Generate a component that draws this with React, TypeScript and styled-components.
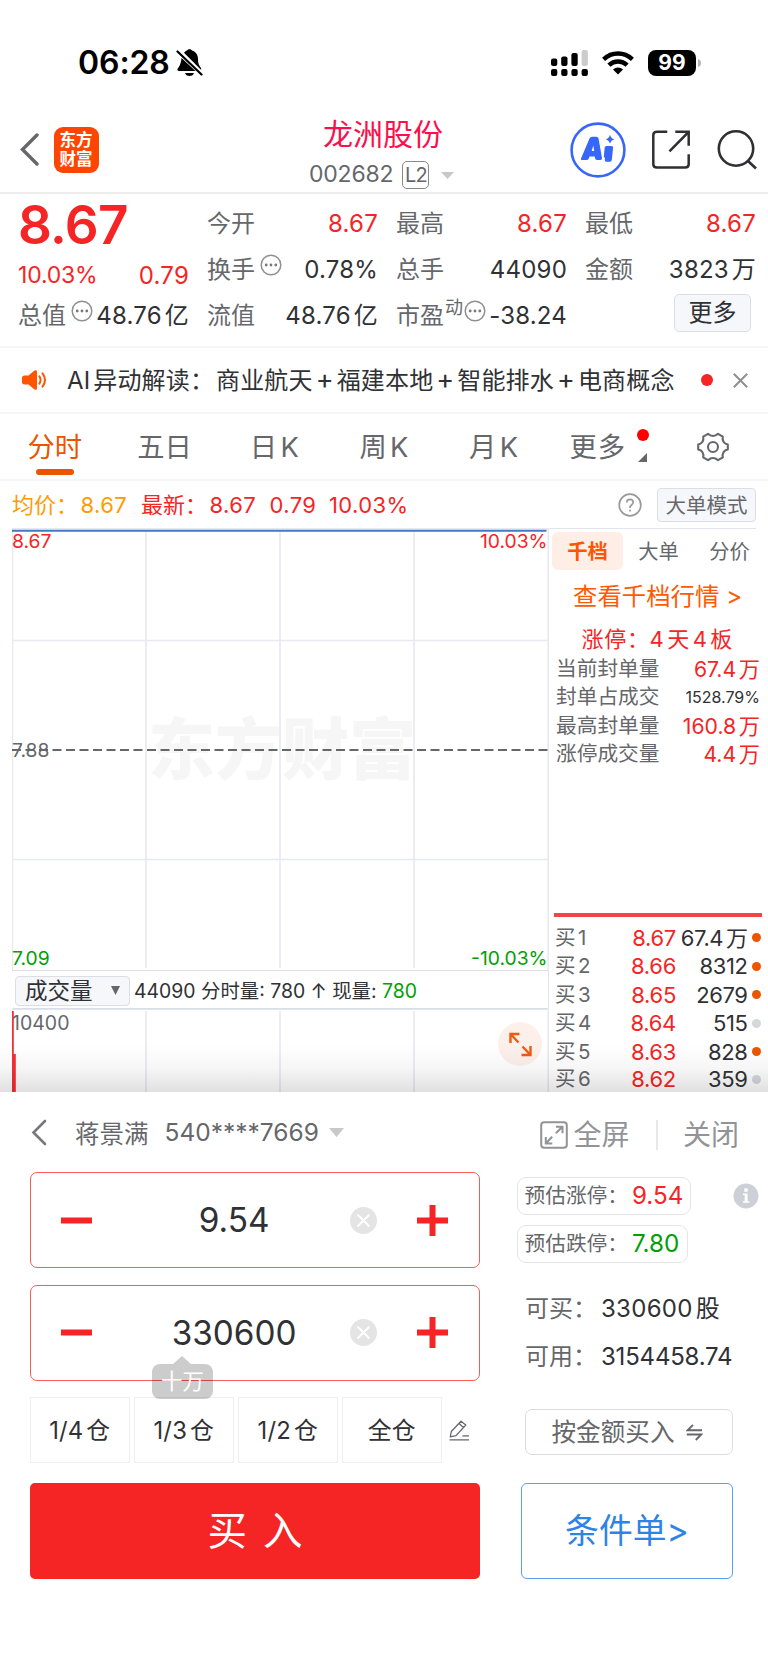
import React from 'react';
import styled, { createGlobalStyle } from 'styled-components';

const RED = '#f52525';
const GREEN = '#00a005';
const ORANGE = '#ff5500';
const DARK = '#303134';
const GRAY = '#66676b';
const FONT = 'Inter, "Noto Sans CJK SC", sans-serif';

const GlobalStyle = createGlobalStyle`
  * { box-sizing: border-box; }
  body { margin: 0; background: #fff; font-family: ${FONT}; color: ${DARK}; text-autospace: normal; }
  svg { display: block; flex: none; }
`;

const Page = styled.main`
  width: 768px;
  height: 1670px;
  display: flex;
  flex-direction: column;
  background: #fff;
  overflow: hidden;
  white-space: nowrap;
`;

const Text = styled.span<{ $size: number; $color?: string; $weight?: number; $ls?: number }>`
  font-size: ${(p) => p.$size}px;
  line-height: 1.2;
  color: ${(p) => p.$color ?? DARK};
  font-weight: ${(p) => p.$weight ?? 400};
  letter-spacing: ${(p) => p.$ls ?? 0}px;
`;

/* ---------- status bar ---------- */
const StatusBar = styled.div`
  height: 105px;
  padding: 21px 67px 0 78px;
  display: flex;
  align-items: center;
`;
const BellSlot = styled.span`
  margin-left: 6px;
`;
const StatusRight = styled.div`
  margin-left: auto;
  display: flex;
  align-items: center;
  gap: 14px;
`;
const Battery = styled.div`
  width: 48px;
  height: 26px;
  border-radius: 8px;
  background: #000;
  color: #fff;
  font-size: 21px;
  font-weight: 700;
  line-height: 26px;
  text-align: center;
`;
const BatteryGroup = styled.div`
  display: flex;
  align-items: center;
  gap: 2px;
`;

/* ---------- header ---------- */
const Header = styled.header`
  height: 89px;
  border-bottom: 2px solid #ededee;
  display: grid;
  grid-template-columns: 309px 1fr 198px;
`;
const HeaderLeft = styled.div`
  display: flex;
  align-items: center;
  padding: 0 0 0 20px;
  height: 89px;
  gap: 14.5px;
`;
const Logo = styled.div`
  width: 45px;
  height: 46px;
  border-radius: 9px;
  background: #ff4600;
  color: #fff;
  font-size: 16.5px;
  font-weight: 700;
  line-height: 19px;
  text-align: center;
  padding-top: 4px;
`;
const HeaderMid = styled.div`
  padding-top: 10.5px;
`;
const StockName = styled.h1`
  margin: 0 0 0 14px;
  font-size: 30px;
  line-height: 36px;
  font-weight: 400;
  color: #fb0f4d;
`;
const CodeRow = styled.div`
  display: flex;
  align-items: center;
  height: 30px;
  margin-top: 8.5px;
`;
const LevelBadge = styled.div`
  width: 27px;
  height: 28px;
  border: 1.5px solid #87888b;
  border-radius: 5px;
  margin: 0 12px 0 9px;
  color: ${GRAY};
  font-size: 20px;
  line-height: 26px;
  text-align: center;
  letter-spacing: -1px;
`;
const HeaderRight = styled.div`
  display: flex;
  align-items: center;
  height: 89px;
`;
const HeaderIcon = styled.span<{ $ml: number }>`
  margin-left: ${(p) => p.$ml}px;
`;

/* ---------- quote ---------- */
const Quote = styled.section`
  height: 154px;
  border-bottom: 2px solid #f6f6f7;
  padding: 6px 12px 0 18px;
  display: grid;
  grid-template-columns: repeat(4, 170px);
  column-gap: 19px;
`;
const QuoteCol = styled.div`
  display: flex;
  flex-direction: column;
`;
const QuoteRow = styled.div<{ $h?: number }>`
  height: ${(p) => p.$h ?? 46}px;
  display: flex;
  align-items: center;
  font-size: 24px;
  line-height: 29px;
`;
const Label = styled.span`
  color: ${GRAY};
`;
const Value = styled.span<{ $color?: string }>`
  margin: 0 -1px 0 auto;
  color: ${(p) => p.$color ?? DARK};
  letter-spacing: 0.2px;
`;
const RaisedIcon = styled.span`
  margin: 0 -8px 9px 5px;
`;
const Sup = styled.span`
  font-size: 18px;
  color: ${GRAY};
  margin: 0 -4px 16px 1px;
`;
const MoreButton = styled.button`
  width: 77px;
  height: 38px;
  margin: -4px 4px 0 auto;
  padding: 0;
  border: 1.5px solid #dcdee5;
  border-radius: 5px;
  background: #f6f7fb;
  font: 24px/36px ${FONT};
  color: ${DARK};
`;

/* ---------- news ---------- */
const News = styled.section`
  height: 66px;
  border-bottom: 2px solid #f6f6f7;
  padding: 0 20px 0 21px;
  display: flex;
  align-items: center;
`;
const NewsText = styled.span`
  margin-left: 20px;
  width: 634px;
  font-size: 24px;
  line-height: 29px;
  letter-spacing: 0.15px;
`;
const NewsLead = styled.span`
  margin-right: 2px;
`;
const PlusSign = styled.span`
  margin: 0 3px;
  font-size: 27px;
  line-height: 1;
`;
const Dot = styled.span<{ $d: number; $color: string }>`
  width: ${(p) => p.$d}px;
  height: ${(p) => p.$d}px;
  border-radius: 50%;
  flex: none;
  background: ${(p) => p.$color};
`;
const Push = styled.span`
  margin-left: auto;
`;

/* ---------- tabs ---------- */
const Tabs = styled.nav`
  height: 67px;
  border-bottom: 2px solid #f6f6f7;
  display: flex;
`;
const Tab = styled.div<{ $active?: boolean; $w?: number; $ls?: number }>`
  width: ${(p) => p.$w ?? 109.7}px;
  display: flex;
  flex-direction: column;
  align-items: center;
  padding-top: 17px;
  font-size: 27.3px;
  line-height: 34px;
  letter-spacing: ${(p) => p.$ls ?? 0}px;
  color: ${(p) => (p.$active ? '#ec5500' : GRAY)};
  &::after {
    content: '';
    width: 38px;
    height: 6px;
    margin-top: 4px;
    border-radius: 3px;
    background: ${(p) => (p.$active ? '#ec5500' : 'transparent')};
  }
`;
const TabFlag = styled.div`
  width: 20px;
  margin-left: -14px;
  padding-top: 15px;
  display: flex;
  flex-direction: column;
  align-items: center;
  gap: 12px;
`;
const TabGear = styled.div`
  margin-left: 44.5px;
  padding-top: 17.5px;
`;

/* ---------- info ---------- */
const Info = styled.section`
  height: 47px;
  padding: 1.5px 12px 0;
  display: flex;
  align-items: center;
  font-size: 22px;
  line-height: 27px;
  color: ${RED};
`;
const InfoItem = styled.span<{ $w: number; $color?: string }>`
  width: ${(p) => p.$w}px;
  letter-spacing: 0.4px;
  color: ${(p) => p.$color ?? RED};
`;
const InfoName = styled.span`
  letter-spacing: 0;
  margin-right: 2.5px;
`;
const ModeButton = styled.button`
  width: 99px;
  height: 34px;
  margin-left: 15px;
  padding: 0;
  border: 1.5px solid #dcdee5;
  border-radius: 4px;
  background: #f6f7fb;
  color: ${GRAY};
  font: 20.5px/31px ${FONT};
`;

/* ---------- market ---------- */
const Market = styled.section`
  height: 564px;
  margin: 0 0 0 12px;
  display: grid;
  grid-template-columns: 538px 218px;
  position: relative;
`;
const ChartCol = styled.div`
  display: flex;
  flex-direction: column;
`;
const VolumeBar = styled.div`
  height: 37px;
  display: flex;
  align-items: center;
  font-size: 19px;
  line-height: 24px;
  padding: 2px 0 0 3px;
  border-right: 1.5px solid #e1e4ec;
  width: 537px;
`;
const VolumeSelect = styled.div`
  width: 115px;
  height: 30px;
  border: 1.5px solid #dcdee5;
  border-radius: 4px;
  background: #f6f7fb;
  display: flex;
  align-items: center;
  justify-content: space-between;
  padding: 0 9px;
  font-size: 22.5px;
  margin-right: 4px;
`;
const VolumeText = styled.span<{ $color?: string }>`
  font-size: 19.4px;
  padding-top: 1px;
  color: ${(p) => p.$color ?? DARK};
`;
const Shade = styled.div`
  position: absolute;
  left: -12px;
  right: 0;
  bottom: 0;
  height: 48px;
  background: linear-gradient(to bottom, rgba(0, 0, 0, 0), rgba(0, 0, 0, 0.035) 50%, rgba(0, 0, 0, 0.12));
`;

const BookCol = styled.div`
  display: flex;
  flex-direction: column;
  border-top: 1.5px solid #e1e4ec;
  width: 206px;
`;
const BookTabs = styled.div`
  display: flex;
  padding: 3px 0 0 2px;
`;
const BookTab = styled.div<{ $active?: boolean }>`
  width: 71px;
  height: 38px;
  flex: none;
  border-radius: 6px;
  text-align: center;
  font-size: 20.3px;
  line-height: 40px;
  color: ${(p) => (p.$active ? ORANGE : GRAY)};
  font-weight: ${(p) => (p.$active ? 700 : 400)};
  background: ${(p) => (p.$active ? '#ffeee6' : 'transparent')};
`;
const BookLink = styled.div`
  margin: 9px 0 0 23px;
  font-size: 24.4px;
  line-height: 34px;
  color: #ff5a00;
`;
const LimitTitle = styled.div`
  margin: 10px 0 0 31.5px;
  font-size: 22px;
  line-height: 32px;
  letter-spacing: 0.7px;
  color: ${RED};
`;
const LimitRow = styled.div`
  display: flex;
  justify-content: space-between;
  align-items: center;
  height: 28.5px;
  width: 204px;
  margin-left: 6px;
`;
const Pressure = styled.div`
  width: 208px;
  height: 4px;
  background: #f24545;
  margin: 144px 0 6.5px 4px;
`;
const BidRow = styled.div`
  display: grid;
  grid-template-columns: 60px 61px 71.5px 9px;
  align-items: center;
  height: 28.5px;
  flex: none;
  margin-left: 5px;
  width: 207px;
  font-size: 22px;
  line-height: 22px;
  &:last-child {
    height: 26px;
    padding-bottom: 0;
    line-height: 20px;
  }
`;
const BidName = styled.span`
  font-size: 20.5px;
  color: ${GRAY};
`;
const BidPrice = styled.span`
  text-align: right;
  color: ${RED};
  letter-spacing: -0.3px;
`;
const BidQty = styled.span`
  justify-self: end;
  letter-spacing: -0.4px;
`;
const BidDot = styled(Dot)`
  margin-left: 4px;
`;

/* ---------- trade sheet ---------- */
const Sheet = styled.section`
  height: 578px;
  display: flex;
  flex-direction: column;
  background: #fff;
`;
const AccountBar = styled.div`
  height: 80px;
  padding: 1px 29px 0 31px;
  display: flex;
  align-items: center;
`;
const AccountName = styled.span`
  margin: 0 16px 0 28px;
  font-size: 24.5px;
  color: ${GRAY};
`;
const AccountCaret = styled.span`
  margin-left: 10px;
`;
const AccountActions = styled.div`
  margin: 5px 0 0 auto;
  display: flex;
  align-items: center;
  gap: 5px;
  font-size: 28px;
  line-height: 34px;
  color: #929397;
`;
const Separator = styled.span`
  width: 1.5px;
  height: 30px;
  background: #e8e8ea;
  margin: 0 20px 0 22px;
`;
const SheetBody = styled.div`
  display: grid;
  grid-template-columns: 450px 1fr;
  padding: 0 0 0 30px;
`;
const Left = styled.div`
  display: flex;
  flex-direction: column;
`;
const Stepper = styled.div`
  position: relative;
  height: 96px;
  margin-bottom: 16.5px;
  border: 1.5px solid #f95a5a;
  border-radius: 7px;
  display: grid;
  grid-template-columns: 90.6px 218px 47px 92px;
  align-items: center;
  justify-items: center;
`;
const StepValue = styled.span`
  font-size: 33.3px;
  line-height: 40px;
  padding-left: 7px;
`;
const UnitTip = styled.div`
  position: absolute;
  left: 121px;
  top: 78px;
  width: 61px;
  height: 35px;
  border-radius: 8px;
  background: rgba(0, 0, 0, 0.2);
  color: #fff;
  font-size: 21.5px;
  line-height: 34px;
  text-align: center;
  &::before {
    content: '';
    position: absolute;
    left: 21px;
    top: -8px;
    border: 9px solid transparent;
    border-top: 0;
    border-bottom: 8px solid rgba(0, 0, 0, 0.2);
  }
`;
const Shares = styled.div`
  display: flex;
  align-items: center;
  gap: 4.5px;
`;
const Share = styled.button`
  width: 99.5px;
  height: 66px;
  padding: 2px 0 0;
  background: #fff;
  border: 1.5px solid #efeff1;
  color: ${DARK};
  font: 23.8px/30px ${FONT};
  letter-spacing: 0.2px;
`;
const EditIcon = styled.span`
  margin-left: 3px;
`;
const BuyButton = styled.button`
  width: 450px;
  height: 96px;
  margin: 20px 0 0;
  padding: 0;
  border: 0;
  border-radius: 5px;
  background: ${RED};
  color: #fff;
  font: 39.5px/50px ${FONT};
  word-spacing: 5px;
`;
const Right = styled.div`
  display: flex;
  flex-direction: column;
  padding: 5px 0 0 37px;
`;
const PillRow = styled.div`
  display: flex;
  align-items: center;
  justify-content: space-between;
  padding-right: 9px;
  margin-bottom: 9.5px;
`;
const Pill = styled.div<{ $w: number }>`
  width: ${(p) => p.$w}px;
  height: 38px;
  border: 1.5px solid #e3e5ea;
  border-radius: 9px;
  display: flex;
  align-items: center;
  padding-left: 6.5px;
  font-size: 20.7px;
  line-height: 32px;
  color: ${GRAY};
`;
const PillValue = styled.span<{ $color: string }>`
  margin-left: 4px;
  font-size: 24.2px;
  color: ${(p) => p.$color};
`;
const Holdings = styled.div`
  margin-top: 13px;
`;
const Holding = styled.div`
  height: 48px;
  display: flex;
  align-items: center;
  padding-left: 8px;
  font-size: 24px;
  line-height: 30px;
`;
const HoldingLabel = styled.span`
  width: 76px;
  color: ${GRAY};
`;
const HoldingValue = styled.span<{ $ls: number }>`
  letter-spacing: ${(p) => p.$ls}px;
`;
const AmountButton = styled.button`
  width: 208px;
  height: 46px;
  margin: 28px 0 0 7.5px;
  padding: 0 2px 0 0;
  border: 1.5px solid #dcdde0;
  border-radius: 7px;
  background: #fff;
  color: ${GRAY};
  font: 24.6px/30px ${FONT};
  display: flex;
  align-items: center;
  justify-content: center;
  gap: 12px;
`;
const ConditionButton = styled.button`
  width: 212px;
  height: 96px;
  margin: 28px 0 0 4px;
  padding: 0;
  border: 1.5px solid #5b9df0;
  border-radius: 6px;
  background: #fff;
  color: #2d83e6;
  font: 33.8px/40px ${FONT};
`;

/* ---------- icons ---------- */
const Chevron = ({ w, h, sw, color }: { w: number; h: number; sw: number; color: string }) => (
  <svg width={w} height={h} viewBox={`0 0 ${w} ${h}`} fill="none" stroke={color} strokeWidth={sw} strokeLinecap="round">
    <path d={`M${w - 2} 2L2.5 ${h / 2}L${w - 2} ${h - 2}`} />
  </svg>
);
const Caret = ({ w, h, color }: { w: number; h: number; color: string }) => (
  <svg width={w} height={h} viewBox="0 0 10 10" preserveAspectRatio="none">
    <path d="M0 0H10L5 10Z" fill={color} />
  </svg>
);
const BellOff = () => (
  <svg width="27" height="28" viewBox="0 0 27 28">
    <path d="M8 3.8C9 2.4 10 1.8 11 1.4C12 -.2 15 -.2 16 1.4C20 2.5 22 6 22 10C22 15 23.5 17 25 19L25.2 21Z" fill="#000" />
    <path d="M5.5 9L19.5 22H3.2C1.5 22 .8 20.6 1.8 19.4C4.5 16.5 5 13 5.5 9Z" fill="#000" />
    <path d="M9 24H18C17 26.4 15.5 27 13.5 27S10 26.4 9 24Z" fill="#000" />
    <path d="M1.5 2.5L25.5 25.5" stroke="#000" strokeWidth="2.2" strokeLinecap="round" />
  </svg>
);
const Signal = () => (
  <svg width="37" height="26" viewBox="0 0 37 26">
    <rect x="0" y="8.5" width="6.3" height="7.5" rx="2" />
    <rect x="10.2" y="6.5" width="6.3" height="9.5" rx="2" />
    <rect x="20.4" y="3" width="6.3" height="13" rx="2" />
    <rect x="30.6" y="0" width="6.3" height="16" rx="2" fill="#ccc" />
    {[0, 10.2, 20.4, 30.6].map((x) => (
      <rect key={x} x={x} y="19" width="6.3" height="7" rx="2" />
    ))}
  </svg>
);
const Wifi = () => (
  <svg width="32" height="24" viewBox="0 0 32 24" fill="none" stroke="#000" strokeWidth="4.4">
    <path d="M1.6 8.4C9.8 .6 22.2 .6 30.4 8.4" />
    <path d="M6.9 14.2C12.1 9.2 19.9 9.2 25.1 14.2" />
    <path d="M11 18.6C13.8 15.9 18.2 15.9 21 18.6L16 23.6Z" fill="#000" stroke="none" />
  </svg>
);
const AiLogo = () => (
  <svg width="56" height="56" viewBox="0 0 56 56">
    <circle cx="28" cy="28" r="26.4" fill="none" stroke="#3766fb" strokeWidth="2.6" />
    <path
      fillRule="evenodd"
      d="M11 36.5L19.5 16.5Q20.3 14.8 22.2 14.8H26.2Q28.2 14.8 28.6 16.7L32 36Q32.3 38 30.3 38H27Q25.3 38 25 36.2L24.7 34.6H19.6L18.8 36.4Q18.1 38 16.3 38H12Q10.3 38 11 36.5ZM21.7 29H24.2L23.3 23.6Z"
      fill="#3766fb"
    />
    <path d="M36.5 24H41.5Q43.3 24 43.1 25.8L41.8 38Q41.6 39.7 39.8 39.7H36.4Q34.6 39.7 34.8 38L35 36L33.8 35L34.7 25.6Q34.9 24 36.5 24Z" fill="#3766fb" />
    <path d="M40 12.8Q41 16.4 44.2 17.3Q41 18.2 40 21.6Q39 18.2 35.8 17.3Q39 16.4 40 12.8Z" fill="#3766fb" />
  </svg>
);
const ShareOut = () => (
  <svg width="38" height="39" viewBox="0 0 38 39" fill="none" stroke="#303033" strokeWidth="2.5" strokeLinecap="square">
    <path d="M14 1.8H5Q1.3 1.8 1.3 5.2V34.2Q1.3 37.6 5 37.6H33Q36.7 37.6 36.7 34.2V25.5" />
    <path d="M24.5 1.8H36.7V14.5M36 2.5L18.3 20.5" />
  </svg>
);
const Search = () => (
  <svg width="40" height="40" viewBox="0 0 40 40" fill="none" stroke="#303033" strokeWidth="2.6">
    <circle cx="19" cy="18.5" r="17.2" />
    <path d="M31 31L39 38.5" />
  </svg>
);
const Dots = () => (
  <svg width="22" height="22" viewBox="0 0 22 22">
    <circle cx="11" cy="11" r="9.8" fill="none" stroke="#8f9093" strokeWidth="1.5" />
    {[6.2, 11, 15.8].map((x) => (
      <circle key={x} cx={x} cy="11" r="1.4" fill="#77787b" />
    ))}
  </svg>
);
const Speaker = () => (
  <svg width="26" height="22" viewBox="0 0 26 22">
    <path d="M3.5 6.5H7.5L13.5 1.6Q16 .2 16 3V19Q16 21.8 13.5 20.4L7.5 15.5H3.5Q1 15.5 1 13V9Q1 6.5 3.5 6.5Z" fill="#ff5500" />
    <path d="M18.5 7.4Q20.6 11 18.5 14.6M21.5 4.4Q26.5 11 21.5 17.6" fill="none" stroke="#ff5500" strokeWidth="2" strokeLinecap="round" />
  </svg>
);
const Cross = () => (
  <svg width="15" height="15" viewBox="0 0 15 15" stroke="#8e8f92" strokeWidth="2">
    <path d="M.8 .8L14.2 14.2M14.2 .8L.8 14.2" />
  </svg>
);
const Gear = () => (
  <svg width="32" height="30" viewBox="0 0 32 30" fill="none" stroke="#66676b" strokeWidth="2.1" strokeLinejoin="round">
    <path d="M11 1.8Q13.3 4 16 4T21 1.8L25.8 4.6Q25.2 7.6 26.5 9.8T30.8 12.6V17.4Q27.8 18 26.5 20.2T25.8 25.4L21 28.2Q18.7 26 16 26T11 28.2L6.2 25.4Q6.8 22.4 5.5 20.2T1.2 17.4V12.6Q4.2 12 5.5 9.8T6.2 4.6Z" />
    <circle cx="16" cy="15" r="5" />
  </svg>
);
const Help = () => (
  <svg width="24" height="24" viewBox="0 0 24 24" fill="none" stroke="#98999c" strokeWidth="1.7">
    <circle cx="12" cy="12" r="10.8" />
    <path d="M8.8 9.6Q8.8 6.3 12 6.3T15.2 9.3Q15.2 10.8 13.5 12T12 15M12 16.8V18.6" />
  </svg>
);
const Expand = () => (
  <svg width="28" height="28" viewBox="0 0 28 28" fill="none" stroke="#929397" strokeWidth="2">
    <rect x="1.2" y="1.2" width="25.6" height="25.6" rx="3" />
    <path d="M16 5.8H22.5V12.3M22.2 6L15.8 12.2M5.8 16V22.5H12.3M6 22.2L12.2 15.8" />
  </svg>
);
const Minus = () => (
  <svg width="31" height="31" viewBox="0 0 31 31">
    <path d="M0 12.5H31V18.5H0Z" fill={RED} />
  </svg>
);
const Plus = () => (
  <svg width="31" height="31" viewBox="0 0 31 31">
    <path d="M0 12.5H12.5V0H18.5V12.5H31V18.5H18.5V31H12.5V18.5H0Z" fill={RED} />
  </svg>
);
const Clear = () => (
  <svg width="27" height="27" viewBox="0 0 27 27">
    <circle cx="13.5" cy="13.5" r="13.5" fill="#e4e4e5" />
    <path d="M7.5 7.5L19.5 19.5M19.5 7.5L7.5 19.5" stroke="#fff" strokeWidth="2" />
  </svg>
);
const Pencil = () => (
  <svg width="21" height="21" viewBox="0 0 21 21" fill="none" stroke="#66676b" strokeWidth="1.3" strokeLinejoin="round">
    <path d="M1.3 16.8L2.3 11.5L12 1.3L16.8 5L7 15.6ZM10 3.4L14.5 7.4M.5 19.8H20M13.5 15.8H20" />
  </svg>
);
const Swap = () => (
  <svg width="17" height="17" viewBox="0 0 17 17" fill="none" stroke="#66676b" strokeWidth="1.9">
    <path d="M7 .8L1.6 6.3H16M.8 10.5H15.2L9.8 16" />
  </svg>
);
const InfoIcon = () => (
  <svg width="26" height="26" viewBox="0 0 26 26">
    <circle cx="13" cy="13" r="12.5" fill="#cdd1d7" />
    <circle cx="13" cy="7" r="2" fill="#fff" />
    <path d="M10 10.6H14.6V18.3H16.3V19.8H10V18.3H11.7V12.1H10Z" fill="#fff" />
  </svg>
);

const GRID = '#e6e9f0';

const PriceChart = () => (
  <svg width="538" height="443" viewBox="0 0 538 443" fontFamily={FONT} fontSize="19.3">
    <text x="136" y="246" fontSize="67" fontWeight="900" fill="#f6f6f7" textLength="268">东方财富</text>
    <g stroke={GRID} strokeWidth="1.6">
      <path d="M0 .8H538M.4 0V443M536.2 0V443M0 112.5H536M0 331.5H536M134 3V440M268 3V440M402 3V440" />
    </g>
    <path d="M0 443H536" stroke="#dcdfe6" strokeWidth="2" />
    <path d="M0 2.8H534.5" stroke="#4379bf" strokeWidth="2" />
    <path d="M0 222H536" stroke="#66676b" strokeWidth="1.8" strokeDasharray="9 4.5" />
    <g>
      <text x="0" y="19.5" fill={RED}>8.67</text>
      <text x="535.5" y="19.5" fill={RED} textAnchor="end">10.03%</text>
      <text x="0" y="229" fill={GRAY}>7.88</text>
      <text x="0" y="436.5" fill={GREEN}>7.09</text>
      <text x="535.5" y="436.5" fill={GREEN} textAnchor="end">-10.03%</text>
    </g>
  </svg>
);

const VolumeChart = () => (
  <svg width="538" height="84" viewBox="0 0 538 84" fontFamily={FONT} fontSize="19.5">
    <path d="M0 .9H536" stroke="#d8dde6" strokeWidth="1.8" />
    <path d="M.4 0V84M536.2 0V84M134 3V84M268 3V84M402 3V84" stroke={GRID} strokeWidth="1.6" />
    <path d="M0 3H1.8V46H3.8V84H0Z" fill="#f52f35" />
    <text x="0" y="22" fill={GRAY}>10400</text>
    <circle cx="508" cy="36" r="22" fill="#fdf0ea" />
    <path
      d="M498.5 35V26H507.5M499 26.5L506.5 34.5M518.5 38V47H509.5M518 46.5L510.5 38.5"
      fill="none"
      stroke="#f05a10"
      strokeWidth="2.4"
    />
  </svg>
);

const concepts = ['商业航天', '福建本地', '智能排水', '电商概念'];
const limits = [
  { name: '当前封单量', value: '67.4万', color: RED, size: 21.2 },
  { name: '封单占成交', value: '1528.79%', color: DARK, size: 16 },
  { name: '最高封单量', value: '160.8万', color: RED, size: 21.2 },
  { name: '涨停成交量', value: '4.4万', color: RED, size: 21.2 },
];
const bids = [
  { n: '买1', price: '8.67', qty: '67.4万', hot: true },
  { n: '买2', price: '8.66', qty: '8312', hot: true },
  { n: '买3', price: '8.65', qty: '2679', hot: true },
  { n: '买4', price: '8.64', qty: '515', hot: false },
  { n: '买5', price: '8.63', qty: '828', hot: true },
  { n: '买6', price: '8.62', qty: '359', hot: false },
];

export default function App() {
  return (
    <Page>
      <GlobalStyle />
      <StatusBar>
        <Text $size={32} $weight={600} $color="#000" $ls={-0.1}>06:28</Text>
        <BellSlot><BellOff /></BellSlot>
        <StatusRight>
          <Signal />
          <Wifi />
          <BatteryGroup>
            <Battery>99</Battery>
            <svg width="3" height="8" viewBox="0 0 3 8"><path d="M0 0Q3 1 3 4T0 8Z" fill="#b5b5b5" /></svg>
          </BatteryGroup>
        </StatusRight>
      </StatusBar>

      <Header>
        <HeaderLeft>
          <Chevron w={19} h={33} sw={3.4} color="#66676b" />
          <Logo>东方<br />财富</Logo>
        </HeaderLeft>
        <HeaderMid>
          <StockName>龙洲股份</StockName>
          <CodeRow>
            <Text $size={23} $color={GRAY} $ls={-0.2}>002682</Text>
            <LevelBadge>L2</LevelBadge>
            <Caret w={13} h={7} color="#c8c8ca" />
          </CodeRow>
        </HeaderMid>
        <HeaderRight>
          <AiLogo />
          <HeaderIcon $ml={25.5}><ShareOut /></HeaderIcon>
          <HeaderIcon $ml={27}><Search /></HeaderIcon>
        </HeaderRight>
      </Header>

      <Quote>
        <QuoteCol>
          <QuoteRow $h={52}><Text $size={53} $weight={600} $color={RED} $ls={-0.7}>8.67</Text></QuoteRow>
          <QuoteRow $h={47}>
            <Text $size={23} $color={RED} $ls={-0.2}>10.03%</Text>
            <Value $color={RED}>0.79</Value>
          </QuoteRow>
          <QuoteRow $h={32}>
            <Label>总值</Label><RaisedIcon><Dots /></RaisedIcon><Value>48.76亿</Value>
          </QuoteRow>
        </QuoteCol>
        <QuoteCol>
          <QuoteRow><Label>今开</Label><Value $color={RED}>8.67</Value></QuoteRow>
          <QuoteRow><Label>换手</Label><RaisedIcon><Dots /></RaisedIcon><Value>0.78%</Value></QuoteRow>
          <QuoteRow><Label>流值</Label><Value>48.76亿</Value></QuoteRow>
        </QuoteCol>
        <QuoteCol>
          <QuoteRow><Label>最高</Label><Value $color={RED}>8.67</Value></QuoteRow>
          <QuoteRow><Label>总手</Label><Value>44090</Value></QuoteRow>
          <QuoteRow><Label>市盈</Label><Sup>动</Sup><RaisedIcon><Dots /></RaisedIcon><Value>-38.24</Value></QuoteRow>
        </QuoteCol>
        <QuoteCol>
          <QuoteRow><Label>最低</Label><Value $color={RED}>8.67</Value></QuoteRow>
          <QuoteRow><Label>金额</Label><Value>3823万</Value></QuoteRow>
          <QuoteRow><MoreButton>更多</MoreButton></QuoteRow>
        </QuoteCol>
      </Quote>

      <News>
        <Speaker />
        <NewsText>
          <NewsLead>AI异动解读：</NewsLead>
          {concepts.map((c, i) => (
            <React.Fragment key={c}>
              {i > 0 && <PlusSign>+</PlusSign>}
              {c}
            </React.Fragment>
          ))}
        </NewsText>
        <Dot $d={12} $color={RED} />
        <Push><Cross /></Push>
      </News>

      <Tabs>
        <Tab $active>分时</Tab>
        <Tab>五日</Tab>
        <Tab>日K</Tab>
        <Tab>周K</Tab>
        <Tab>月K</Tab>
        <Tab $w={98.5} $ls={1}>更多</Tab>
        <TabFlag>
          <Dot $d={12} $color="#ff0000" />
          <svg width="9" height="9" viewBox="0 0 9 9"><path d="M9 0V9H0Z" fill="#66676b" /></svg>
        </TabFlag>
        <TabGear><Gear /></TabGear>
      </Tabs>

      <Info>
        <InfoItem $w={129} $color="#ff9b00"><InfoName>均价：</InfoName>8.67</InfoItem>
        <InfoItem $w={128.5}><InfoName>最新：</InfoName>8.67</InfoItem>
        <InfoItem $w={59.5}>0.79</InfoItem>
        <InfoItem $w={289}>10.03%</InfoItem>
        <Help />
        <ModeButton>大单模式</ModeButton>
      </Info>

      <Market>
        <ChartCol>
          <PriceChart />
          <VolumeBar>
            <VolumeSelect>成交量<Caret w={9} h={9} color="#66676b" /></VolumeSelect>
            <VolumeText>44090 分时量: 780 ↑ 现量:&nbsp;</VolumeText>
            <VolumeText $color={GREEN}>780</VolumeText>
          </VolumeBar>
          <VolumeChart />
        </ChartCol>
        <BookCol>
          <BookTabs>
            <BookTab $active>千档</BookTab>
            <BookTab>大单</BookTab>
            <BookTab>分价</BookTab>
          </BookTabs>
          <BookLink>查看千档行情 &gt;</BookLink>
          <LimitTitle>涨停：4天4板</LimitTitle>
          {limits.map((l) => (
            <LimitRow key={l.name}>
              <Text $size={20.7} $color={GRAY}>{l.name}</Text>
              <Text $size={l.size} $color={l.color}>{l.value}</Text>
            </LimitRow>
          ))}
          <Pressure />
          {bids.map((b) => (
            <BidRow key={b.n}>
              <BidName>{b.n}</BidName>
              <BidPrice>{b.price}</BidPrice>
              <BidQty>{b.qty}</BidQty>
              <BidDot $d={9} $color={b.hot ? '#ec5500' : '#d5d7dc'} />
            </BidRow>
          ))}
        </BookCol>
        <Shade />
      </Market>

      <Sheet>
        <AccountBar>
          <Chevron w={16} h={27} sw={2.6} color="#77787b" />
          <AccountName>蒋景满</AccountName>
          <Text $size={24.5} $color={GRAY}>540****7669</Text>
          <AccountCaret><Caret w={15} h={9} color="#c8c8ca" /></AccountCaret>
          <AccountActions>
            <Expand />
            <span>全屏</span>
            <Separator />
            <span>关闭</span>
          </AccountActions>
        </AccountBar>
        <SheetBody>
          <Left>
            <Stepper>
              <Minus />
              <StepValue>9.54</StepValue>
              <Clear />
              <Plus />
            </Stepper>
            <Stepper>
              <Minus />
              <StepValue>330600</StepValue>
              <Clear />
              <Plus />
              <UnitTip>十万</UnitTip>
            </Stepper>
            <Shares>
              <Share>1/4仓</Share>
              <Share>1/3仓</Share>
              <Share>1/2仓</Share>
              <Share>全仓</Share>
              <EditIcon><Pencil /></EditIcon>
            </Shares>
            <BuyButton>买 入</BuyButton>
          </Left>
          <Right>
            <PillRow>
              <Pill $w={174}>预估涨停：<PillValue $color={RED}>9.54</PillValue></Pill>
              <InfoIcon />
            </PillRow>
            <PillRow>
              <Pill $w={171}>预估跌停：<PillValue $color={GREEN}>7.80</PillValue></Pill>
            </PillRow>
            <Holdings>
              <Holding><HoldingLabel>可买：</HoldingLabel><HoldingValue $ls={0.3}>330600股</HoldingValue></Holding>
              <Holding><HoldingLabel>可用：</HoldingLabel><HoldingValue $ls={-0.2}>3154458.74</HoldingValue></Holding>
            </Holdings>
            <AmountButton>按金额买入<Swap /></AmountButton>
            <ConditionButton>条件单&gt;</ConditionButton>
          </Right>
        </SheetBody>
      </Sheet>
    </Page>
  );
}
